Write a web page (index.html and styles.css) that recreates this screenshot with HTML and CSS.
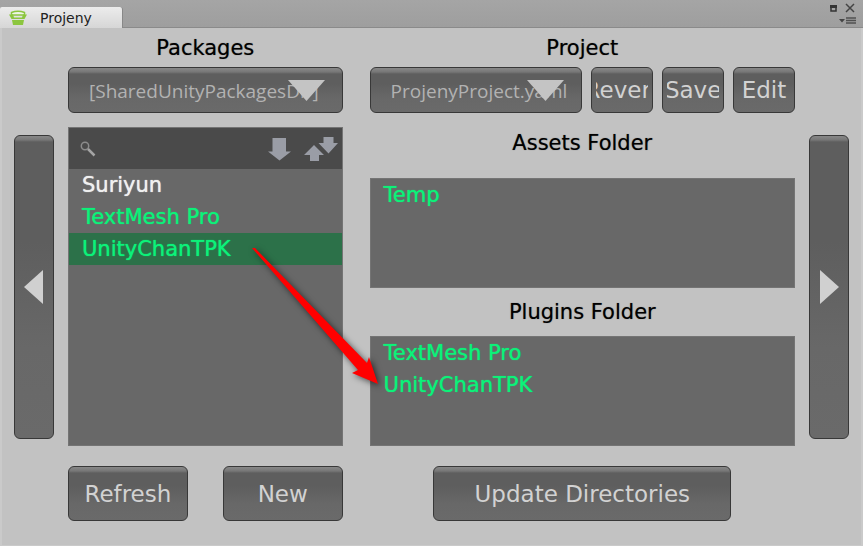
FILE: index.html
```html
<!DOCTYPE html>
<html lang="en">
<head>
    <meta charset="UTF-8">
    <meta name="viewport" content="width=device-width, initial-scale=1.0">
    <title>Projeny</title>
    <link rel="stylesheet" href="styles.css">
</head>
<body>
    <header class="tab-bar">
        <a class="tab" href="#projeny">
            <svg class="tab-logo" width="18" height="16" viewBox="0 0 18 16">
                <path d="M2.5 5V2.5Q9 0 15.500 2.500V5Z" fill="#eef5e6" stroke="#8cc63f" stroke-width="1.500"/>
                <path d="M0 4.500H4L5 7.500H13L14 4.500H18L15.500 9H2.500Z" fill="#8cc63f"/>
                <path d="M3 10H15L14 15H4Z" fill="#8cc63f"/>
            </svg>
            Projeny
        </a>
        <div class="window-controls">
            <div class="window-row">
                <button class="window-button" aria-label="Maximize">
                    <svg width="7" height="7" viewBox="0 0 7 7"><path d="M1 1.5H6V6H1Z" fill="none" stroke="#333" stroke-width="1.5"/><path d="M0 0H7V3H0Z" fill="#333"/></svg>
                </button>
                <button class="window-button" aria-label="Close">
                    <svg width="10" height="10" viewBox="0 0 10 10"><path d="M1 1L9 9M9 1L1 9" stroke="#444" stroke-width="1.5"/></svg>
                </button>
            </div>
            <button class="window-button" aria-label="Tab menu">
                <svg width="18" height="8" viewBox="0 0 18 8"><path d="M0 2H6L3 5.5Z" fill="#444"/><path d="M7 1H17M7 3.5H17M7 6H17" stroke="#505050" stroke-width="1.5"/></svg>
            </button>
        </div>
    </header>

    <main class="window" id="projeny">
        <button class="button side-button" aria-label="Previous view">
            <svg width="20" height="34" viewBox="0 0 20 34"><path d="M0 17L19 0V34Z" fill="#d0d0d0"/></svg>
        </button>

        <section class="column">
            <h2 class="title"><label for="package-dir">Packages</label></h2>
            <div class="dropdown">
                <select class="button" id="package-dir">
                    <option>[SharedUnityPackagesDir]</option>
                </select>
                <svg class="dropdown-arrow" width="37" height="21" viewBox="0 0 37 21"><path d="M0 0H37L18.500 21Z" fill="#c4c4c4"/></svg>
            </div>
            <div class="panel package-panel">
                <div class="toolbar">
                    <label class="search-label" for="search" aria-label="Search packages">
                        <svg width="16" height="16" viewBox="0 0 16 16"><circle cx="5" cy="5" r="3.700" fill="none" stroke="#8c8c8c" stroke-width="1.500"/><path d="M8 8L14.500 14.500" stroke="#a4a4a4" stroke-width="2.500"/></svg>
                    </label>
                    <input class="search" id="search" type="text">
                    <button class="tool" aria-label="Sort descending">
                        <svg width="23" height="24" viewBox="0 0 23 24"><path d="M4.500 1H18V14.500H23L11.500 23.500L0 14.500H4.500Z" fill="#9a9da6"/></svg>
                    </button>
                    <button class="tool" aria-label="Change sort order">
                        <svg width="34" height="24" viewBox="0 0 34 24"><path d="M6 24V18H0L10 8L20 18H15V24Z" fill="#9a9da6"/><path d="M19.500 0H29.500V6H34L24.500 16.500L14.500 6H19.500Z" fill="#9a9da6"/></svg>
                    </button>
                </div>
                <ul class="items">
                    <li>Suriyun</li>
                    <li class="installed">TextMesh Pro</li>
                    <li class="installed selected">UnityChanTPK</li>
                </ul>
                <svg class="drag-arrow" width="132" height="144" viewBox="0 0 132 144">
                    <path d="M2 3L5 3L117 118L119 112L128 139L102 128L108 125Z" fill="#f00"/>
                </svg>
            </div>
            <div class="actions">
                <button class="button action">Refresh</button>
                <button class="button action">New</button>
            </div>
        </section>

        <section class="column">
            <h2 class="title"><label for="project-file">Project</label></h2>
            <div class="project-row">
                <div class="dropdown">
                    <select class="button" id="project-file">
                        <option>ProjenyProject.yaml</option>
                    </select>
                    <svg class="dropdown-arrow" width="37" height="21" viewBox="0 0 37 21"><path d="M0 0H37L18.500 21Z" fill="#c4c4c4"/></svg>
                </div>
                <button class="button small"><span class="clip">Revert</span></button>
                <button class="button small"><span class="clip">Save</span></button>
                <button class="button small"><span class="clip">Edit</span></button>
            </div>
            <h3 class="title assets-title">Assets Folder</h3>
            <div class="panel">
                <ul class="items">
                    <li class="installed">Temp</li>
                </ul>
            </div>
            <h3 class="title plugins-title">Plugins Folder</h3>
            <div class="panel">
                <ul class="items">
                    <li class="installed">TextMesh Pro</li>
                    <li class="installed">UnityChanTPK</li>
                </ul>
            </div>
            <div class="actions centered">
                <button class="button action update">Update Directories</button>
            </div>
        </section>

        <button class="button side-button" aria-label="Next view">
            <svg width="20" height="34" viewBox="0 0 20 34"><path d="M20 17L1 0V34Z" fill="#d0d0d0"/></svg>
        </button>
    </main>
</body>
</html>
```

FILE: styles.css
```css
:root {
    --background: #c2c2c2;
    --panel: #686868;
    --toolbar: #4a4a4a;
    --installed: #0cf279;
    --selected: #2c7149;
    --button-text: #d2d2d2;
}

* {
    box-sizing: border-box;
}

body {
    display: flex;
    flex-direction: column;
    min-height: 100vh;
    margin: 0;
    background: var(--background);
    font-family: "DejaVu Sans", Verdana, sans-serif;
    font-size: 21px;
    color: #000;
}

button, select, input {
    font: inherit;
}

.tab-bar {
    display: flex;
    justify-content: space-between;
    align-items: flex-end;
    height: 28px;
    background: linear-gradient(#a5a5a5, #9e9e9e);
    border-bottom: 1px solid #8a8a8a;
}

.tab {
    display: flex;
    align-items: center;
    gap: 13px;
    width: 123px;
    height: 21px;
    margin-bottom: -1px;
    padding-left: 9px;
    background: linear-gradient(#ececec, #d6d6d6);
    border-right: 1px solid #888;
    border-radius: 2px 3px 0 0;
    font-size: 14px;
    color: #222;
    text-decoration: none;
}

.window-controls {
    display: flex;
    flex-direction: column;
    align-items: flex-end;
    gap: 4px;
    padding: 0 6px 2px 0;
}

.window-row {
    display: flex;
    align-items: center;
    gap: 8px;
    padding-right: 2px;
}

.window-button {
    display: flex;
    padding: 0;
    border: 0;
    background: none;
}

.window {
    flex: 1;
    display: grid;
    grid-template-columns: 40px minmax(0, 275fr) minmax(0, 439fr) 40px;
    column-gap: 14px;
    padding: 0 12px;
    border: solid #cacaca;
    border-width: 0 2px 1px;
}

.column {
    display: flex;
    flex-direction: column;
    padding-bottom: 24px;
}

.column + .column {
    margin-left: 13px;
}

.title {
    margin: 0;
    font-size: 21px;
    font-weight: normal;
    line-height: 40px;
    text-align: center;
    text-shadow: 0 0 1px rgba(0, 0, 0, 0.5);
}

h2.title {
    height: 39px;
}

.assets-title {
    margin: 10px 0 15px;
}

.plugins-title {
    line-height: 48px;
}

.button {
    border: 1px solid #383838;
    border-radius: 6px;
    background: linear-gradient(#888, #777 4px, #5e5e5e 6px, #5e5e5e 35%, #686868 70%, #6a6a6a);
    color: var(--button-text);
    font-size: 23px;
}

.side-button {
    display: flex;
    align-items: center;
    justify-content: center;
    margin: 107px 0 106px;
    padding: 0;
}

.dropdown {
    position: relative;
    flex: none;
}

.dropdown select {
    appearance: none;
    display: block;
    width: 100%;
    height: 46px;
    padding: 2px 4px 0 20px;
    font-family: "Open Sans", "Noto Sans", sans-serif;
    font-size: 19px;
    color: #b2b2b2;
}

/* sits on top of the end of the file name */
.dropdown-arrow {
    position: absolute;
    top: 13px;
    right: 18px;
    pointer-events: none;
}

.project-row {
    display: flex;
    gap: 9px;
}

.project-row .dropdown {
    flex: 1 1 213px;
    min-width: 0;
}

.small {
    flex: 0 1 62px;
    min-width: 0;
    height: 46px;
    padding: 0 4px;
}

.clip {
    display: flex;
    justify-content: center;
    overflow: hidden;
}

.panel {
    flex: 1;
    background: var(--panel);
    border: 1px solid #747474;
}

.package-panel {
    position: relative;
    margin-top: 14px;
}

.toolbar {
    display: flex;
    align-items: center;
    gap: 13px;
    height: 41px;
    padding: 0 4px 0 11px;
    background: var(--toolbar);
}

.search-label {
    display: flex;
}

.search {
    flex: 1;
    min-width: 0;
    border: 0;
    background: none;
    color: #ddd;
    font-size: 16px;
}

.tool {
    display: flex;
    padding: 0;
    border: 0;
    background: none;
}

.items {
    margin: 0;
    padding: 0;
    list-style: none;
    color: #f0f0f0;
    text-shadow: 0 0 1px currentColor;
}

.items li {
    height: 32px;
    padding-left: 13px;
    line-height: 33px;
}

.items .installed {
    color: var(--installed);
    text-shadow: 0 0 1px currentColor;
}

.items .selected {
    background: var(--selected);
}

.drag-arrow {
    position: absolute;
    top: 117px;
    right: -40px;
    z-index: 1;
    filter: drop-shadow(2px 2px 3px rgba(0, 0, 0, 0.6));
    pointer-events: none;
}

.actions {
    display: flex;
    justify-content: space-between;
    gap: 35px;
    margin-top: 20px;
}

.actions.centered {
    justify-content: center;
}

.action {
    flex: 1;
    height: 55px;
    padding: 0;
}

.update {
    flex: 0 1 70%;
}
```
